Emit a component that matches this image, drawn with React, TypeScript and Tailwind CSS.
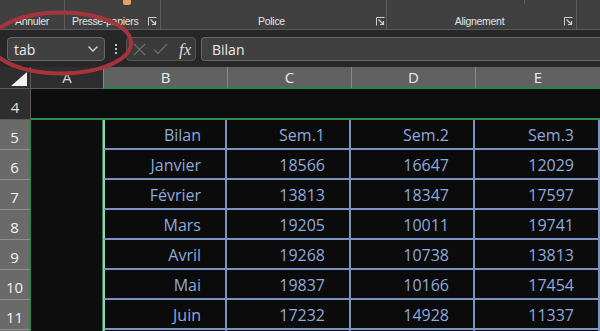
import React from "react";

const rows = [
  { n: 5, cells: ["Bilan", "Sem.1", "Sem.2", "Sem.3"] },
  { n: 6, cells: ["Janvier", "18566", "16647", "12029"] },
  { n: 7, cells: ["Février", "13813", "18347", "17597"] },
  { n: 8, cells: ["Mars", "19205", "10011", "19741"] },
  { n: 9, cells: ["Avril", "19268", "10738", "13813"] },
  { n: 10, cells: ["Mai", "19837", "10166", "17454"] },
  { n: 11, cells: ["Juin", "17232", "14928", "11337"] },
  { n: 0, cells: ["", "", "", ""] },
];

function Launcher() {
  return (
    <svg width="9" height="9" viewBox="0 0 9 9" className="shrink-0">
      <path d="M0.5 8.5V0.5H8.5" fill="none" stroke="#cfcfcf" strokeWidth="1" />
      <path d="M2.5 2.5L7.5 7.5M4 7.5H7.5V4" fill="none" stroke="#cfcfcf" strokeWidth="1.2" />
    </svg>
  );
}

function Ribbon() {
  return (
    <div className="flex h-[30px] bg-[#404040] border-b border-[#5a5a5a] font-['Liberation_Sans',sans-serif] text-[10.5px] tracking-[-0.3px] leading-none text-[#e4e4e4] whitespace-nowrap">
      <div className="w-[65px] flex items-end justify-center pb-[3px] border-r border-[#5c5c5c]">
        Annuler
      </div>
      <div className="relative w-[96px] flex items-end justify-between pb-[3px] pl-[7px] pr-[3px] border-r border-[#5c5c5c]">
        <div className="absolute left-[58px] top-0 h-[5px] w-[8px] rounded-b-[2px] bg-[#e3a55a]" />
        <span>Presse-papiers</span>
        <Launcher />
      </div>
      <div className="w-[226px] flex items-end pb-[3px] border-r border-[#5c5c5c]">
        <span className="flex-1 text-center pl-[6px]">Police</span>
        <span className="mr-[1px]">
          <Launcher />
        </span>
      </div>
      <div className="relative w-[190px] flex items-end pb-[3px] border-r border-[#5c5c5c]">
        <div className="absolute left-[137px] top-0 h-[4px] border-l border-[#5c5c5c]" />
        <span className="flex-1 text-center pl-[8px]">Alignement</span>
        <span className="mr-[3px]">
          <Launcher />
        </span>
      </div>
      <div className="flex-1" />
    </div>
  );
}

function FormulaBar() {
  return (
    <div className="bg-[#272727] pt-[7px] pb-[6px] pl-[7px]">
      <div className="flex h-[24px] items-stretch">
        <div className="w-[98px] flex items-center justify-between rounded-[4px] border border-[#666] bg-[#404040] pl-[6px] pr-[5px] text-[14px] text-[#ececec]">
          <span>tab</span>
          <svg width="12" height="8" viewBox="0 0 12 8">
            <path d="M1.5 1.5L6 6L10.5 1.5" fill="none" stroke="#d0d0d0" strokeWidth="1.4" />
          </svg>
        </div>
        <div className="w-[21px] flex flex-col items-center justify-center gap-[2px]">
          <span className="h-[2px] w-[2px] bg-[#bdbdbd]" />
          <span className="h-[2px] w-[2px] bg-[#bdbdbd]" />
          <span className="h-[2px] w-[2px] bg-[#bdbdbd]" />
        </div>
        <div className="w-[70px] flex items-center rounded-[4px] border border-[#555] bg-[#3a3a3a] pl-[6px] gap-[7px]">
          <svg width="13" height="13" viewBox="0 0 13 13">
            <path d="M1 1L12 12M12 1L1 12" stroke="#6c6c6c" strokeWidth="1.3" />
          </svg>
          <svg width="15" height="12" viewBox="0 0 15 12">
            <path d="M1 6.5L5 10.5L14 1" fill="none" stroke="#6c6c6c" strokeWidth="1.3" />
          </svg>
          <span className="font-['Liberation_Serif',serif] italic text-[17px] leading-none text-[#dcdcdc] ml-[4px]">
            fx
          </span>
        </div>
        <div className="flex-1 ml-[5px] flex items-center rounded-l-[4px] border border-r-0 border-[#666] bg-[#404040] pl-[10px] text-[14px] text-[#ececec]">
          Bilan
        </div>
      </div>
    </div>
  );
}

function Sheet() {
  const cols = ["B", "C", "D", "E"];
  return (
    <div className="grid grid-cols-[31px_72px_124px_124px_124px_125px] text-[#ececec]">
      {/* column headers */}
      <div className="relative h-[22px] bg-[#2e2e2e] border-r border-b border-[#5a5a5a]">
        <svg width="16" height="14" viewBox="0 0 16 14" className="absolute right-[3px] bottom-[2px]">
          <path d="M16 0V14H0Z" fill="#f2f2f2" />
        </svg>
      </div>
      <div className="h-[22px] bg-[#2e2e2e] border-b border-[#5a5a5a] flex items-center justify-center text-[15px] text-[#d6d6d6]">
        A
      </div>
      {cols.map((c) => (
        <div
          key={c}
          className="h-[22px] bg-[#616161] border-l border-[#8a8a8a] border-b-2 border-b-[#1f8a4c] flex items-center justify-center text-[15px]"
        >
          {c}
        </div>
      ))}

      {/* row 4 */}
      <div className="h-[31px] bg-[#2e2e2e] border-r border-b border-[#5a5a5a] flex items-center justify-center pt-[6px] text-[15px] text-[#e0e0e0]">
        4
      </div>
      <div className="col-span-5 h-[31px] bg-[#0d0d0d] border-b-2 border-[#2f8c55]" />

      {rows.map((r) => (
        <React.Fragment key={r.n}>
          <div className="h-[30px] bg-[#6a6a6a] border-b border-[#8e8e8e] border-r-2 border-r-[#1f8a4c] flex items-center justify-center pt-[5px] text-[15px] text-[#f2f2f2]">
            {r.n > 0 ? r.n : ""}
          </div>
          <div className="h-[30px] bg-[#0d0d0d] border-r border-[#1f8a4c]" />
          {r.cells.map((v, ci) => (
            <div
              key={ci}
              className={
                "h-[30px] bg-[#0b0b0b] border-b-2 border-r-2 border-[#7d93c2] flex items-center justify-end pr-[24px] pt-[2px] text-[16px] text-[#8ea9da] " +
                (ci === 0 ? "border-l-2 border-l-[#b3c4ba]" : "")
              }
            >
              {v}
            </div>
          ))}
        </React.Fragment>
      ))}
    </div>
  );
}

export default function App() {
  return (
    <div className="relative w-[600px] h-[331px] overflow-hidden bg-[#0d0d0d] font-['Open_Sans',sans-serif]">
      <Ribbon />
      <FormulaBar />
      <Sheet />
      <svg
        width="600"
        height="331"
        className="absolute left-0 top-0 pointer-events-none"
      >
        <ellipse cx="61" cy="43" rx="70" ry="30.5" fill="none" stroke="#a5343b" strokeWidth="4" />
      </svg>
    </div>
  );
}
